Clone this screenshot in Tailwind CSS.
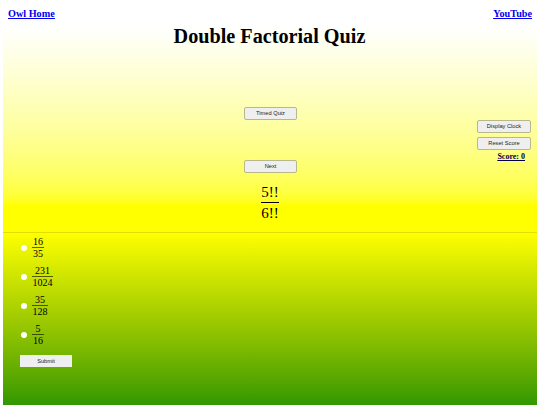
<!doctype html>
<html><head><script src="https://cdn.jsdelivr.net/npm/@tailwindcss/browser@4"></script></head>
<body class="w-[540px] h-[405px] overflow-hidden bg-white font-['Liberation_Serif',serif] text-black">
<div class="h-[232px] mx-[3px] bg-linear-to-b from-white from-[26px] to-[#ffff00] to-[205px] relative">
  <div class="flex justify-between px-[5px] pt-[7px] text-[10.2px] leading-[13px] font-bold text-[#0000ee] underline">
    <a href="#">Owl Home</a><a href="#">YouTube</a>
  </div>
  <h1 class="text-center text-[20.2px] leading-[24px] font-bold mt-[4px] pr-[1px]">Double Factorial Quiz</h1>
  <div class="absolute left-[241px] top-[107px] w-[53px] h-[13px] flex items-center justify-center rounded-[2px] bg-[#efefef] border border-[#b8b890] font-['Liberation_Sans',sans-serif] text-[5.7px] text-[#222]">Timed Quiz</div>
  <div class="absolute left-[241px] top-[160px] w-[53px] h-[13px] flex items-center justify-center rounded-[2px] bg-[#efefef] border border-[#b8b890] font-['Liberation_Sans',sans-serif] text-[5.7px] text-[#222]">Next</div>
  <div class="absolute left-[474px] top-[120px] w-[54px] flex flex-col gap-[4px]">
    <div class="w-full h-[13px] flex items-center justify-center rounded-[2px] bg-[#efefef] border border-[#b8b890] font-['Liberation_Sans',sans-serif] text-[5.7px] text-[#222]">Display Clock</div>
    <div class="w-full h-[13px] flex items-center justify-center rounded-[2px] bg-[#efefef] border border-[#b8b890] font-['Liberation_Sans',sans-serif] text-[5.7px] text-[#222]">Reset Score</div>
    <div class="text-[8px] leading-[10px] font-bold underline text-[#000050] text-right pr-[6px] -mt-[2px]">Score: 0</div>
  </div>
  <div class="absolute left-[258px] top-[184px] flex flex-col items-center text-[15px] leading-[17px] w-[18px]">
    <span>5!!</span><span class="w-full text-center border-t border-black mt-px pt-[2px]">6!!</span>
  </div>
</div>
<div class="h-[173px] mx-[3px] border-t border-[#e0e000] bg-linear-to-b from-[#ffff00] to-[#339900] to-[170px] pl-[18px] pt-0">
  <div class="flex items-center h-[29px]"><span class="w-[6px] h-[6px] rounded-full bg-white mr-[5px]"></span><span class="flex flex-col items-center text-[10px] leading-[11px] w-[12px]"><span>16</span><span class="w-full text-center border-t border-black/60">35</span></span></div>
  <div class="flex items-center h-[29px]"><span class="w-[6px] h-[6px] rounded-full bg-white mr-[5px]"></span><span class="flex flex-col items-center text-[10px] leading-[11px] w-[21px]"><span>231</span><span class="w-full text-center border-t border-black/60">1024</span></span></div>
  <div class="flex items-center h-[29px]"><span class="w-[6px] h-[6px] rounded-full bg-white mr-[5px]"></span><span class="flex flex-col items-center text-[10px] leading-[11px] w-[16px]"><span>35</span><span class="w-full text-center border-t border-black/60">128</span></span></div>
  <div class="flex items-center h-[29px]"><span class="w-[6px] h-[6px] rounded-full bg-white mr-[5px]"></span><span class="flex flex-col items-center text-[10px] leading-[11px] w-[12px]"><span>5</span><span class="w-full text-center border-t border-black/60">16</span></span></div>
  <div class="-ml-[1px] mt-[6px] w-[52px] h-[12px] flex items-center justify-center bg-[#efefef] font-['Liberation_Sans',sans-serif] text-[5.7px] text-[#222]">Submit</div>
</div>
</body></html>
